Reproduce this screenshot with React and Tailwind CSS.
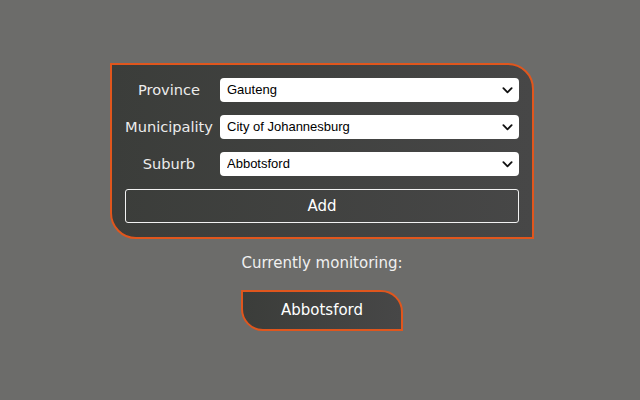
import React, { useState } from 'react';

const provinces = ['Gauteng', 'Western Cape', 'KwaZulu-Natal'];
const municipalities = ['City of Johannesburg', 'City of Tshwane', 'Ekurhuleni'];
const suburbs = ['Abbotsford', 'Auckland Park', 'Bryanston'];

function Chevron() {
    return (
        <svg className="w-[11px] h-[11px] absolute right-[6px] top-1/2 -translate-y-1/2 pointer-events-none" viewBox="0 0 12 12" fill="none">
            <path d="M1.5 4l4.5 4.5L10.5 4" stroke="#111" strokeWidth="2" strokeLinecap="round" strokeLinejoin="round" />
        </svg>
    );
}

function Field({ label, value, options, onChange }) {
    return (
        <div className="flex items-center">
            <label className="w-[88px] mr-[7px] shrink-0 text-center text-[14.6px] text-[#ececec] whitespace-nowrap">{label}</label>
            <div className="relative flex-1">
                <select
                    value={value}
                    onChange={(e) => onChange(e.target.value)}
                    className="block appearance-none w-full h-[24px] bg-white rounded-[4px] pl-[7px] pr-6 text-[13px] text-black outline-none font-['Liberation_Sans',Arial,sans-serif]"
                >
                    {options.map(o => <option key={o} value={o}>{o}</option>)}
                </select>
                <Chevron />
            </div>
        </div>
    );
}

function App() {
    const [province, setProvince] = useState('Gauteng');
    const [municipality, setMunicipality] = useState('City of Johannesburg');
    const [suburb, setSuburb] = useState('Abbotsford');
    const [monitoring, setMonitoring] = useState(['Abbotsford']);

    return (
        <div className="min-h-screen w-full bg-[#6c6c6a] font-['DejaVu_Sans',Verdana,sans-serif] pt-[63px] pl-[4px] flex flex-col items-center">
            <div className="w-[424px] border-2 border-[#e0561d] rounded-tr-[26px] rounded-bl-[26px] bg-gradient-to-r from-[#3b3d3a] to-[#474747] px-[13px] pt-[13px] pb-[14px] flex flex-col gap-[13px]">
                <Field label="Province" value={province} options={provinces} onChange={setProvince} />
                <Field label="Municipality" value={municipality} options={municipalities} onChange={setMunicipality} />
                <Field label="Suburb" value={suburb} options={suburbs} onChange={setSuburb} />
                <button
                    onClick={() => !monitoring.includes(suburb) && setMonitoring([...monitoring, suburb])}
                    className="h-[34px] w-full border border-[#f2f2f2] rounded-[3px] text-[15px] text-white"
                >
                    Add
                </button>
            </div>

            <p className="mt-[13px] text-[15px] text-[#f0f0f0]">Currently monitoring:</p>

            <div className="mt-[15px] flex flex-col items-center gap-2">
                {monitoring.map(m => (
                    <div key={m} className="w-[162px] h-[41px] flex items-center justify-center border-2 border-[#e0561d] rounded-tr-[22px] rounded-bl-[22px] bg-gradient-to-r from-[#3b3d3a] to-[#474747] text-[15px] text-white">
                        {m}
                    </div>
                ))}
            </div>
        </div>
    );
}

export default App;
